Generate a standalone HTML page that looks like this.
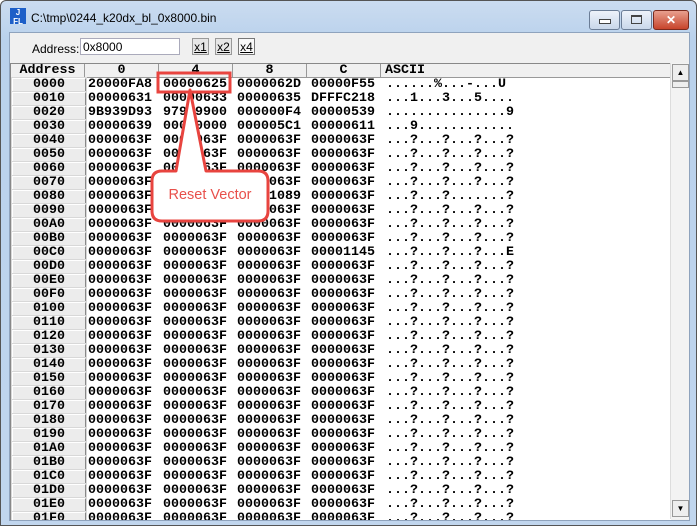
<!DOCTYPE html>
<html><head><meta charset="utf-8"><style>
body{margin:0;width:697px;height:526px;overflow:hidden;background:#fff;font-family:"Liberation Sans",sans-serif;}
.win{position:absolute;left:0;top:0;width:695px;height:524px;border:1px solid #555;border-radius:6px 6px 0 0;background:linear-gradient(#cbdcf0,#b9d1ec 40px,#c1d6ee);}
.title{position:absolute;left:30px;top:10px;font-size:12px;color:#000;}
.logo{position:absolute;left:9px;top:7px;width:16px;height:16px;background:#1d5fc8;color:#fff;font:bold 8px "Liberation Sans";text-align:center;line-height:9px;}
.btn{position:absolute;top:9px;height:18px;border:1px solid #6b7d96;border-radius:3px;background:linear-gradient(#eef3fa,#c9d7ea);}
.client{position:absolute;left:8px;top:31px;width:679px;height:487px;background:#f0f0f0;border:1px solid #8fa3bd;}
.lbl{position:absolute;left:22px;top:9px;font-size:12px;}
.inp{position:absolute;left:70px;top:5px;width:100px;height:17px;border:1px solid #aab;background:#fff;font-size:12px;line-height:17px;padding-left:2px;box-sizing:border-box;}
.xb{position:absolute;top:5px;width:17px;height:17px;border:1px solid #999;background:#e6e6e6;font-size:12px;text-align:center;line-height:16px;box-sizing:border-box;text-decoration:underline;}
.grid{position:absolute;left:0;top:30px;width:660px;height:456px;background:#fff;overflow:hidden;border-top:1px solid #888;border-left:1px solid #888;}
.r{position:absolute;left:0;height:14px;width:660px;font:bold 13.33px "Liberation Mono",monospace;line-height:14px;white-space:pre;}
.r span{position:absolute;top:0;}
.r span:nth-child(2){left:77px}.r span:nth-child(3){left:152px}.r span:nth-child(4){left:226px}.r span:nth-child(5){left:300px}.r span:nth-child(6){left:375px}
.r span.a{left:1px;width:72px;height:12px;border:1px solid;border-color:#fff #888 #888 #fff;background:#ececec;text-align:center;line-height:12px;outline:1px solid #d8d8d8;}
.hd span.h{top:0;height:13px;border-right:1px solid #999;border-bottom:1px solid #999;background:#f0f0f0;text-align:center;}
.sb{position:absolute;left:660px;top:30px;width:18px;height:456px;background:#f3f3f3;border-left:1px solid #ddd;}
</style></head><body>
<div class="win">
<div class="logo">J<br>FL</div>
<div class="title">C:\tmp\0244_k20dx_bl_0x8000.bin</div>
<div class="btn" style="left:588px;width:29px"><div style="position:absolute;left:9px;top:8px;width:10px;height:3px;border:1px solid #444;background:#fff"></div></div>
<div class="btn" style="left:620px;width:29px"><div style="position:absolute;left:9px;top:4px;width:9px;height:6px;border:1px solid #444;border-top-width:2px"></div></div>
<div class="btn" style="left:652px;width:34px;background:linear-gradient(#e8a08f,#c7442b);border-color:#7a2a1d;color:#fff;text-align:center;font:bold 12px 'Liberation Sans';line-height:18px">✕</div>
<div class="client">
<div class="lbl">Address:</div>
<div class="inp">0x8000</div>
<div class="xb" style="left:182px">x1</div>
<div class="xb" style="left:205px">x2</div>
<div class="xb" style="left:228px;background:#f8f8f8;border-color:#777">x4</div>
<div class="grid">
<div class="r hd" style="top:0"><span class="h" style="left:0;width:73px">Address</span><span class="h" style="left:74px;width:73px">0</span><span class="h" style="left:148px;width:73px">4</span><span class="h" style="left:222px;width:73px">8</span><span class="h" style="left:296px;width:73px">C</span><span class="h" style="left:370px;width:300px;text-align:left;padding-left:4px">ASCII</span></div>
<div class="r" style="top:14px"><span class="a">0000</span><span>20000FA8</span><span>00000625</span><span>0000062D</span><span>00000F55</span><span>......%...-...U</span></div>
<div class="r" style="top:28px"><span class="a">0010</span><span>00000631</span><span>00000633</span><span>00000635</span><span>DFFFC218</span><span>...1...3...5....</span></div>
<div class="r" style="top:42px"><span class="a">0020</span><span>9B939D93</span><span>97939900</span><span>000000F4</span><span>00000539</span><span>...............9</span></div>
<div class="r" style="top:56px"><span class="a">0030</span><span>00000639</span><span>00000000</span><span>000005C1</span><span>00000611</span><span>...9............</span></div>
<div class="r" style="top:70px"><span class="a">0040</span><span>0000063F</span><span>0000063F</span><span>0000063F</span><span>0000063F</span><span>...?...?...?...?</span></div>
<div class="r" style="top:84px"><span class="a">0050</span><span>0000063F</span><span>0000063F</span><span>0000063F</span><span>0000063F</span><span>...?...?...?...?</span></div>
<div class="r" style="top:98px"><span class="a">0060</span><span>0000063F</span><span>0000063F</span><span>0000063F</span><span>0000063F</span><span>...?...?...?...?</span></div>
<div class="r" style="top:112px"><span class="a">0070</span><span>0000063F</span><span>0000063F</span><span>0000063F</span><span>0000063F</span><span>...?...?...?...?</span></div>
<div class="r" style="top:126px"><span class="a">0080</span><span>0000063F</span><span>0000063F</span><span>00001089</span><span>0000063F</span><span>...?...?.......?</span></div>
<div class="r" style="top:140px"><span class="a">0090</span><span>0000063F</span><span>0000063F</span><span>0000063F</span><span>0000063F</span><span>...?...?...?...?</span></div>
<div class="r" style="top:154px"><span class="a">00A0</span><span>0000063F</span><span>0000063F</span><span>0000063F</span><span>0000063F</span><span>...?...?...?...?</span></div>
<div class="r" style="top:168px"><span class="a">00B0</span><span>0000063F</span><span>0000063F</span><span>0000063F</span><span>0000063F</span><span>...?...?...?...?</span></div>
<div class="r" style="top:182px"><span class="a">00C0</span><span>0000063F</span><span>0000063F</span><span>0000063F</span><span>00001145</span><span>...?...?...?...E</span></div>
<div class="r" style="top:196px"><span class="a">00D0</span><span>0000063F</span><span>0000063F</span><span>0000063F</span><span>0000063F</span><span>...?...?...?...?</span></div>
<div class="r" style="top:210px"><span class="a">00E0</span><span>0000063F</span><span>0000063F</span><span>0000063F</span><span>0000063F</span><span>...?...?...?...?</span></div>
<div class="r" style="top:224px"><span class="a">00F0</span><span>0000063F</span><span>0000063F</span><span>0000063F</span><span>0000063F</span><span>...?...?...?...?</span></div>
<div class="r" style="top:238px"><span class="a">0100</span><span>0000063F</span><span>0000063F</span><span>0000063F</span><span>0000063F</span><span>...?...?...?...?</span></div>
<div class="r" style="top:252px"><span class="a">0110</span><span>0000063F</span><span>0000063F</span><span>0000063F</span><span>0000063F</span><span>...?...?...?...?</span></div>
<div class="r" style="top:266px"><span class="a">0120</span><span>0000063F</span><span>0000063F</span><span>0000063F</span><span>0000063F</span><span>...?...?...?...?</span></div>
<div class="r" style="top:280px"><span class="a">0130</span><span>0000063F</span><span>0000063F</span><span>0000063F</span><span>0000063F</span><span>...?...?...?...?</span></div>
<div class="r" style="top:294px"><span class="a">0140</span><span>0000063F</span><span>0000063F</span><span>0000063F</span><span>0000063F</span><span>...?...?...?...?</span></div>
<div class="r" style="top:308px"><span class="a">0150</span><span>0000063F</span><span>0000063F</span><span>0000063F</span><span>0000063F</span><span>...?...?...?...?</span></div>
<div class="r" style="top:322px"><span class="a">0160</span><span>0000063F</span><span>0000063F</span><span>0000063F</span><span>0000063F</span><span>...?...?...?...?</span></div>
<div class="r" style="top:336px"><span class="a">0170</span><span>0000063F</span><span>0000063F</span><span>0000063F</span><span>0000063F</span><span>...?...?...?...?</span></div>
<div class="r" style="top:350px"><span class="a">0180</span><span>0000063F</span><span>0000063F</span><span>0000063F</span><span>0000063F</span><span>...?...?...?...?</span></div>
<div class="r" style="top:364px"><span class="a">0190</span><span>0000063F</span><span>0000063F</span><span>0000063F</span><span>0000063F</span><span>...?...?...?...?</span></div>
<div class="r" style="top:378px"><span class="a">01A0</span><span>0000063F</span><span>0000063F</span><span>0000063F</span><span>0000063F</span><span>...?...?...?...?</span></div>
<div class="r" style="top:392px"><span class="a">01B0</span><span>0000063F</span><span>0000063F</span><span>0000063F</span><span>0000063F</span><span>...?...?...?...?</span></div>
<div class="r" style="top:406px"><span class="a">01C0</span><span>0000063F</span><span>0000063F</span><span>0000063F</span><span>0000063F</span><span>...?...?...?...?</span></div>
<div class="r" style="top:420px"><span class="a">01D0</span><span>0000063F</span><span>0000063F</span><span>0000063F</span><span>0000063F</span><span>...?...?...?...?</span></div>
<div class="r" style="top:434px"><span class="a">01E0</span><span>0000063F</span><span>0000063F</span><span>0000063F</span><span>0000063F</span><span>...?...?...?...?</span></div>
<div class="r" style="top:448px"><span class="a">01F0</span><span>0000063F</span><span>0000063F</span><span>0000063F</span><span>0000063F</span><span>...?...?...?...?</span></div>
</div>
<div class="sb">
<div style="position:absolute;left:1px;top:1px;width:15px;height:15px;border:1px solid #999;background:#eee;font-size:8px;text-align:center;line-height:15px">▲</div>
<div style="position:absolute;left:1px;top:18px;width:15px;height:5px;border:1px solid #999;background:#eee"></div>
<div style="position:absolute;left:1px;top:437px;width:15px;height:15px;border:1px solid #999;background:#eee;font-size:8px;text-align:center;line-height:15px">▼</div>
</div>
</div>
</div>
<svg style="position:absolute;left:0;top:0" width="697" height="526">
<rect x="158" y="73" width="72" height="19" fill="none" stroke="#e8443f" stroke-width="3"/>
<path d="M190 90 L206 171 L258 171 Q268 171 268 181 L268 211 Q268 221 258 221 L162 221 Q152 221 152 211 L152 181 Q152 171 162 171 L176 171 Z" fill="#fff" stroke="#e8443f" stroke-width="3" stroke-linejoin="round"/>
<text x="210" y="199" text-anchor="middle" font-family="Liberation Sans, sans-serif" font-size="14.5" fill="#e8504b">Reset Vector</text>
</svg>
</body></html>
